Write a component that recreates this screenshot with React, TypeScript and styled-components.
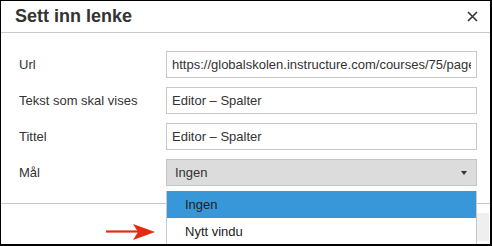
import { Fragment } from 'react';
import { createGlobalStyle, styled } from 'styled-components';

const GlobalStyle = createGlobalStyle`
  html, body {
    margin: 0;
    padding: 0;
    background: #fff;
  }
  body {
    font-family: 'Liberation Sans', Arial, sans-serif;
    color: #333;
  }
`;

const Frame = styled.div`
  position: relative;
  box-sizing: border-box;
  width: 492px;
  height: 246px;
  border: 1px solid #000;
  border-right-width: 2px;
  border-bottom-width: 2px;
  background: #fff;
  overflow: hidden;
  display: flex;
  flex-direction: column;
`;

const Header = styled.div`
  display: flex;
  align-items: center;
  justify-content: space-between;
  height: 31px;
  padding: 0 12px 0 14px;
  border-bottom: 1px solid #c8c8c8;
`;

const Title = styled.h1`
  margin: 0;
  font-size: 18px;
  font-weight: bold;
  line-height: 31px;
  color: #333;
`;

const CloseButton = styled.button`
  display: flex;
  align-items: center;
  justify-content: center;
  width: 12px;
  height: 12px;
  padding: 0;
  border: 0;
  background: none;
  color: #333;
  margin-top: -1px;
`;

const Body = styled.div`
  display: grid;
  grid-template-columns: 147px 311px;
  row-gap: 9px;
  padding: 18px 13px 17px 18px;
  border-bottom: 1px solid #c8c8c8;
`;

const Label = styled.label`
  display: flex;
  align-items: center;
  font-size: 13px;
  color: #333;
`;

const TextField = styled.input`
  box-sizing: border-box;
  width: 100%;
  height: 27px;
  margin: 0;
  padding: 0 5px;
  border: 1px solid #c8c8c8;
  border-radius: 0;
  outline: none;
  font-family: 'Liberation Sans', Arial, sans-serif;
  font-size: 13px;
  color: #333;
  background: #fff;
`;

const SelectBox = styled.div`
  box-sizing: border-box;
  display: flex;
  align-items: center;
  justify-content: space-between;
  height: 27px;
  padding: 0 8px 0 8px;
  border: 1px solid #c4c4c4;
  background: #dcdcdc;
  font-size: 13px;
  color: #333;
`;

const Caret = styled.span`
  width: 0;
  height: 0;
  border-left: 3.5px solid transparent;
  border-right: 3.5px solid transparent;
  border-top: 4px solid #333;
  margin-right: 1px;
`;

const Footer = styled.div`
  display: flex;
  justify-content: flex-end;
  padding: 9px 1px 0 0;
`;

const FooterButton = styled.button`
  height: 28px;
  padding: 0 14px;
  border: 0;
  background: #efefef;
  font-family: 'Liberation Sans', Arial, sans-serif;
  font-size: 13px;
  color: #2d7bd0;
`;

const OptionList = styled.ul`
  position: absolute;
  left: 165px;
  top: 190px;
  box-sizing: border-box;
  width: 311px;
  margin: 0;
  padding: 0;
  list-style: none;
  background: #fff;
  border-left: 1px solid #c8c8c8;
  border-right: 1px solid #c8c8c8;
`;

const Option = styled.li<{ $active?: boolean }>`
  height: 27px;
  line-height: 27px;
  padding-left: 18px;
  font-size: 13px;
  color: #222;
  background: ${(p) => (p.$active ? '#3897d9' : '#fff')};
`;

const Pointer = styled.svg`
  position: absolute;
  left: 103px;
  top: 220px;
`;

const fields = [
  { label: 'Url', value: 'https://globalskolen.instructure.com/courses/75/pages/editor-spalter' },
  { label: 'Tekst som skal vises', value: 'Editor – Spalter' },
  { label: 'Tittel', value: 'Editor – Spalter' },
];

const App = () => {
  return (
    <>
      <GlobalStyle />
      <Frame>
        <Header>
          <Title>Sett inn lenke</Title>
          <CloseButton aria-label="Lukk">
            <svg width="11" height="11" viewBox="0 0 11 11">
              <path d="M1 1L10 10M10 1L1 10" stroke="#333" strokeWidth="1.6" />
            </svg>
          </CloseButton>
        </Header>

        <Body>
          {fields.map((f) => (
            <Fragment key={f.label}>
              <Label>{f.label}</Label>
              <TextField readOnly value={f.value} />
            </Fragment>
          ))}
          <Label>Mål</Label>
          <SelectBox>
            <span>Ingen</span>
            <Caret />
          </SelectBox>
        </Body>

        <Footer>
          <FooterButton>Sett inn</FooterButton>
        </Footer>

        <OptionList>
          <Option $active>Ingen</Option>
          <Option>Nytt vindu</Option>
        </OptionList>

        <Pointer width="54" height="22" viewBox="0 0 54 22">
          <path d="M2 10.5H34" stroke="#e52a12" strokeWidth="2.2" />
          <path d="M29 3L51 11L29 19L34 11Z" fill="#e52a12" />
        </Pointer>
      </Frame>
    </>
  );
};

export default App;
